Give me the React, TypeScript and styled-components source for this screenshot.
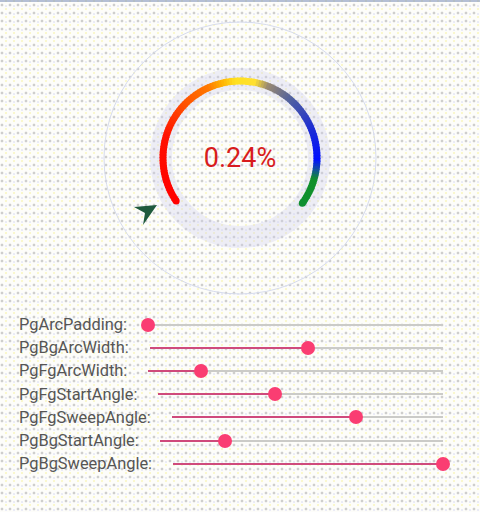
import React from "react";
import styled, { createGlobalStyle } from "styled-components";

const GlobalStyle = createGlobalStyle`
  html, body {
    margin: 0;
    padding: 0;
  }
  body {
    width: 480px;
    min-height: 512px;
    font-family: Roboto, "Noto Sans", "Liberation Sans", sans-serif;
    background-color: #fdfdfa;
    background-image:
      radial-gradient(circle at 2px 5px, rgba(150, 150, 150, 0.45) 0 1.2px, transparent 1.7px),
      radial-gradient(circle at 6px 1px, rgba(245, 240, 150, 0.45) 0 1.1px, transparent 1.6px),
      radial-gradient(circle at 6px 6px, rgba(190, 195, 235, 0.3) 0 1px, transparent 1.5px);
    background-size: 8px 8px, 8px 8px, 8px 8px;
  }
`;

const Page = styled.div`
  width: 480px;
  min-height: 512px;
  display: flex;
  flex-direction: column;
`;

const TopStrip = styled.div`
  height: 2px;
  background: #8496bd;
  opacity: 0.6;
`;

const DialSection = styled.section`
  box-sizing: border-box;
  height: 311px;
  padding-top: 6px;
  display: flex;
  justify-content: center;
`;

const Dial = styled.div`
  position: relative;
  width: 300px;
  height: 300px;
`;

const DialValue = styled.div`
  position: absolute;
  inset: 0;
  display: flex;
  align-items: center;
  justify-content: center;
  font-size: 27px;
  color: #d81c1c;
`;

const SliderList = styled.div`
  display: flex;
  flex-direction: column;
`;

const SliderRow = styled.div`
  display: flex;
  align-items: center;
  height: 23.2px;
  padding: 0 21px 0 19px;
`;

const Label = styled.span`
  font-size: 16.4px;
  color: #555555;
  white-space: nowrap;
  margin-right: 5px;
`;

const Slider = styled.div`
  flex: 1;
  padding: 0 16px;
  display: flex;
  align-items: center;
  height: 100%;
`;

const Track = styled.div`
  position: relative;
  flex: 1;
  height: 2px;
  background: #cbcbc8;
`;

const Fill = styled.div`
  position: absolute;
  left: 0;
  top: 0;
  height: 2px;
  background: #cf4a7c;
`;

const Thumb = styled.div`
  position: absolute;
  top: 50%;
  width: 14px;
  height: 14px;
  margin-left: -7px;
  margin-top: -7px;
  border-radius: 50%;
  background: #fa3d72;
`;

const sliders = [
  { label: "PgArcPadding:", value: 0 },
  { label: "PgBgArcWidth:", value: 0.54 },
  { label: "PgFgArcWidth:", value: 0.18 },
  { label: "PgFgStartAngle:", value: 0.41 },
  { label: "PgFgSweepAngle:", value: 0.68 },
  { label: "PgBgStartAngle:", value: 0.23 },
  { label: "PgBgSweepAngle:", value: 1 },
];

const stops: [number, string][] = [
  [0.0, "#ff0000"],
  [0.2, "#ff1000"],
  [0.3, "#ff4a00"],
  [0.4, "#ff7a00"],
  [0.44, "#ffb000"],
  [0.48, "#ffe020"],
  [0.54, "#ffe030"],
  [0.58, "#9a8a70"],
  [0.66, "#5060a0"],
  [0.76, "#2030d0"],
  [0.86, "#0010ff"],
  [0.89, "#1050a0"],
  [0.92, "#10902a"],
  [1.0, "#109030"],
];

function hexToRgb(h: string) {
  const n = parseInt(h.slice(1), 16);
  return [(n >> 16) & 255, (n >> 8) & 255, n & 255];
}

function colorAt(t: number) {
  for (let i = 0; i < stops.length - 1; i++) {
    const [t0, c0] = stops[i];
    const [t1, c1] = stops[i + 1];
    if (t >= t0 && t <= t1) {
      const k = (t - t0) / (t1 - t0 || 1);
      const a = hexToRgb(c0);
      const b = hexToRgb(c1);
      const m = a.map((v, j) => Math.round(v + (b[j] - v) * k));
      return `rgb(${m[0]},${m[1]},${m[2]})`;
    }
  }
  return stops[stops.length - 1][1];
}

const CX = 150;
const CY = 150;

function pt(r: number, deg: number) {
  const rad = (deg * Math.PI) / 180;
  return [CX + r * Math.cos(rad), CY + r * Math.sin(rad)];
}

const GaugeArc: React.FC = () => {
  const start = 146;
  const sweep = 250;
  const r = 77;
  const N = 125;
  const segs = [];
  for (let i = 0; i < N; i++) {
    const a0 = start + (sweep * i) / N;
    const a1 = start + (sweep * (i + 1)) / N + (i < N - 1 ? 0.6 : 0);
    const p0 = pt(r, a0);
    const p1 = pt(r, a1);
    segs.push(
      <path
        key={i}
        d={`M ${p0[0]} ${p0[1]} A ${r} ${r} 0 0 1 ${p1[0]} ${p1[1]}`}
        stroke={colorAt((i + 0.5) / N)}
        strokeWidth={7}
        fill="none"
      />
    );
  }
  const s = pt(r, start);
  const e = pt(r, start + sweep);
  return (
    <g>
      {segs}
      <circle cx={s[0]} cy={s[1]} r={3.5} fill={colorAt(0)} />
      <circle cx={e[0]} cy={e[1]} r={3.5} fill={colorAt(1)} />
    </g>
  );
};

export default function App() {
  return (
    <Page>
      <GlobalStyle />
      <TopStrip />
      <DialSection>
        <Dial>
          <svg width="300" height="300" viewBox="0 0 300 300">
            <circle cx={CX} cy={CY} r={136} fill="none" stroke="#d6dbec" strokeWidth={1} />
            <circle cx={CX} cy={CY} r={79} fill="none" stroke="rgba(205,205,235,0.32)" strokeWidth={22} />
            <GaugeArc />
            <polygon points="67,197 44,199 55,205 53,217" fill="#1f5a3c" />
          </svg>
          <DialValue>0.24%</DialValue>
        </Dial>
      </DialSection>
      <SliderList>
        {sliders.map((s) => (
          <SliderRow key={s.label}>
            <Label>{s.label}</Label>
            <Slider>
              <Track>
                <Fill style={{ width: `${s.value * 100}%` }} />
                <Thumb style={{ left: `${s.value * 100}%` }} />
              </Track>
            </Slider>
          </SliderRow>
        ))}
      </SliderList>
    </Page>
  );
}
